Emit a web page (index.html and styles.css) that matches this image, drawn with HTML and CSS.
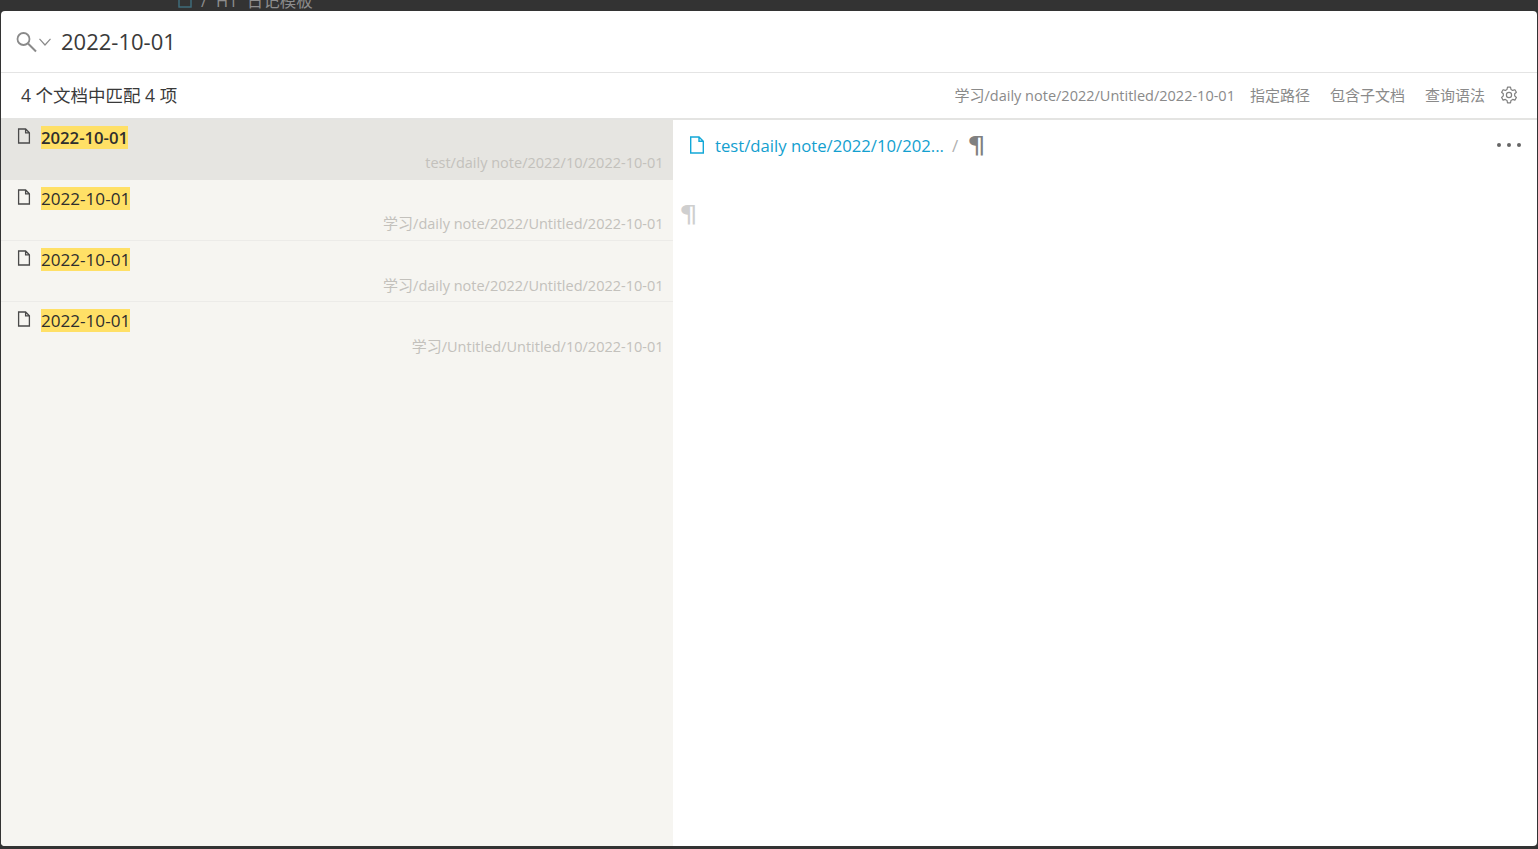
FILE: index.html
```html
<!DOCTYPE html>
<html lang="zh-CN">
<head>
    <meta charset="UTF-8">
    <meta name="viewport" content="width=device-width, initial-scale=1.0">
    <title>搜索</title>
    <link rel="stylesheet" href="styles.css">
</head>
<body>
    <div class="behind">
        <svg class="behind-icon" width="14" height="14" viewBox="0 0 14 14"><rect x="1" y="1" width="12" height="12" fill="none" stroke="#3f6f7f" stroke-width="1.4"/></svg>
        <span>/</span>
        <span>H1</span>
        <span>日记模板</span>
    </div>
    <div class="dialog">
        <div class="search-row">
            <svg class="search-icon" width="22" height="22" viewBox="0 0 22 22"><circle cx="7.5" cy="8" r="6" fill="none" stroke="#8a8a8a" stroke-width="1.8"/><path d="M12 12.5 L20 20.5" stroke="#8a8a8a" stroke-width="2" fill="none"/></svg>
            <svg class="chevron" width="12" height="8" viewBox="0 0 12 8"><path d="M0.5 0.8 L6 7 L11.5 0.8" stroke="#8a8a8a" stroke-width="1.2" fill="none"/></svg>
            <div class="search-text">2022-10-01</div>
        </div>
        <div class="count-row">
            <div class="count">4 个文档中匹配 4 项</div>
            <div class="filters">
                <span class="filter-path"><span class="cjk">学习</span>/daily note/2022/Untitled/2022-10-01</span>
                <span class="filter">指定路径</span>
                <span class="filter">包含子文档</span>
                <span class="filter">查询语法</span>
                <svg class="gear" width="18" height="18" viewBox="0 0 18 18"><path d="M7.5 1.2 H10.5 L11 3.4 L12.7 4.4 L14.9 3.7 L16.4 6.3 L14.7 7.8 V9.9 L16.4 11.5 L14.9 14.1 L12.7 13.4 L11 14.4 L10.5 16.8 H7.5 L7 14.4 L5.3 13.4 L3.1 14.1 L1.6 11.5 L3.3 9.9 V7.8 L1.6 6.3 L3.1 3.7 L5.3 4.4 L7 3.4 Z" fill="none" stroke="#808080" stroke-width="1.2" stroke-linejoin="round"/><circle cx="9" cy="9" r="2.6" fill="none" stroke="#808080" stroke-width="1.2"/></svg>
            </div>
        </div>
        <div class="panels">
            <div class="results">
                <div class="result active">
                    <div class="result-title">
                        <svg class="doc" width="14" height="16" viewBox="0 0 14 16"><path d="M1.6 1 H8.6 L12.4 4.8 V15 H1.6 Z M8.6 1 V4.8 H12.4" fill="none" stroke="#4a4a4a" stroke-width="1.3"/></svg>
                        <mark>2022-10-01</mark>
                    </div>
                    <div class="result-path">test/daily note/2022/10/2022-10-01</div>
                </div>
                <div class="result">
                    <div class="result-title">
                        <svg class="doc" width="14" height="16" viewBox="0 0 14 16"><path d="M1.6 1 H8.6 L12.4 4.8 V15 H1.6 Z M8.6 1 V4.8 H12.4" fill="none" stroke="#4a4a4a" stroke-width="1.3"/></svg>
                        <mark>2022-10-01</mark>
                    </div>
                    <div class="result-path"><span class="cjk">学习</span>/daily note/2022/Untitled/2022-10-01</div>
                </div>
                <div class="result third">
                    <div class="result-title">
                        <svg class="doc" width="14" height="16" viewBox="0 0 14 16"><path d="M1.6 1 H8.6 L12.4 4.8 V15 H1.6 Z M8.6 1 V4.8 H12.4" fill="none" stroke="#4a4a4a" stroke-width="1.3"/></svg>
                        <mark>2022-10-01</mark>
                    </div>
                    <div class="result-path"><span class="cjk">学习</span>/daily note/2022/Untitled/2022-10-01</div>
                </div>
                <div class="result last">
                    <div class="result-title">
                        <svg class="doc" width="14" height="16" viewBox="0 0 14 16"><path d="M1.6 1 H8.6 L12.4 4.8 V15 H1.6 Z M8.6 1 V4.8 H12.4" fill="none" stroke="#4a4a4a" stroke-width="1.3"/></svg>
                        <mark>2022-10-01</mark>
                    </div>
                    <div class="result-path"><span class="cjk">学习</span>/Untitled/Untitled/10/2022-10-01</div>
                </div>
            </div>
            <div class="preview">
                <div class="crumbs">
                    <svg class="doc-blue" width="16" height="18" viewBox="0 0 16 18"><path d="M1.7 1 H10 L14.3 5.3 V17 H1.7 Z M10 1 V5.3 H14.3" fill="none" stroke="#13a8d8" stroke-width="1.4"/></svg>
                    <span class="crumb-link">test/daily note/2022/10/202...</span>
                    <span class="crumb-sep">/</span>
                    <span class="crumb-mark">¶</span>
                    <div class="more"><i></i><i></i><i></i></div>
                </div>
                <div class="empty-mark"><span>¶</span></div>
            </div>
        </div>
    </div>
</body>
</html>
```

FILE: styles.css
```css
* { box-sizing: border-box; }
html, body { height: 100%; }
body {
    margin: 0;
    background-color: #333333;
    font-family: "Open Sans", "Noto Sans CJK SC", sans-serif;
    overflow: hidden;
}
.behind {
    height: 11px;
    overflow: hidden;
    display: flex;
    gap: 9px;
    padding-left: 178px;
    color: #8d8d8d;
    font-size: 16.5px;
    line-height: 20px;
    align-items: flex-end;
}
.behind-icon { flex: none; margin-bottom: 3px; }
.dialog {
    height: 835px;
    margin: 0 1px;
    background-color: white;
    border-radius: 4px;
    overflow: hidden;
    display: flex;
    flex-direction: column;
}
.search-row {
    height: 62px;
    flex: none;
    display: flex;
    align-items: center;
    padding-left: 15px;
    border-bottom: 1px solid #e4e4e4;
}
.chevron { margin-left: 1px; }
.search-text {
    margin-left: 10px;
    margin-bottom: 2px;
    font-size: 22px;
    color: #3a3a3a;
}
.count-row {
    height: 47px;
    flex: none;
    display: flex;
    align-items: center;
    justify-content: space-between;
    padding: 0 19px 2px 20px;
    border-bottom: 2px solid #e4e4e2;
}
.count { font-size: 17.5px; color: #3a3a3a; }
.filters {
    display: flex;
    align-items: center;
    font-size: 15px;
    color: #8a8a8a;
}
.filter-path { margin-right: 15px; font-size: 14.5px; }
.cjk { font-size: 15px; }
.filter { margin-right: 20px; }
.filter:nth-child(4) { margin-right: 15px; }
.panels { flex: 1; display: flex; min-height: 0; }
.results {
    width: 672px;
    flex: none;
    background-color: #f6f5f1;
}
.result {
    height: 61.2px;
    padding: 6px 9.5px 0 16px;
    border-bottom: 1px solid #ecebe8;
}
.result.active {
    height: 60px;
    padding-top: 5px;
    background-color: #e6e5e1;
    border-bottom: none;
}
.result.last { padding-top: 6px; border-bottom: none; }
.result-title {
    display: flex;
    align-items: center;
    height: 24px;
    font-size: 17.1px;
    color: #2e2e2e;
}
.result.active mark { font-weight: 600; font-size: 16.7px; }
.doc { margin-right: 10px; margin-top: -3px; flex: none; }
mark {
    background-color: #ffe066;
    color: inherit;
    line-height: 23px;
}
.result-path {
    text-align: right;
    font-size: 14.5px;
    line-height: 20px;
    margin-top: 3.3px;
    color: #c3c1bc;
}
.result.active .result-path { margin-top: 4px; }
.result.third .result-path { margin-top: 4.3px; }
.result.last .result-path { margin-top: 3.3px; }
.preview { flex: 1; padding: 0 16px 0 6px; }
.crumbs {
    display: flex;
    align-items: center;
    height: 50px;
    padding-left: 10px;
}
.crumb-link { margin-left: 10px; font-size: 16.7px; color: #13a0cf; }
.crumb-sep { margin-left: 8px; font-size: 17px; color: #b0b0b0; }
.crumb-mark {
    margin-left: 9px;
    font-size: 23px;
    line-height: 1;
    color: #808080;
    font-family: "DejaVu Sans", sans-serif;
    transform: scaleX(1.3);
    transform-origin: left center;
}
.more { margin-left: auto; display: flex; gap: 6px; }
.more i {
    width: 4px;
    height: 4px;
    border-radius: 50%;
    background-color: #666666;
}
.empty-mark {
    margin-top: 31px;
    font-size: 23px;
    line-height: 1.2;
    color: #cfcfcf;
    font-family: "DejaVu Sans", sans-serif;
}
.empty-mark span {
    display: inline-block;
    transform: scaleX(1.3);
    transform-origin: left center;
}
```
